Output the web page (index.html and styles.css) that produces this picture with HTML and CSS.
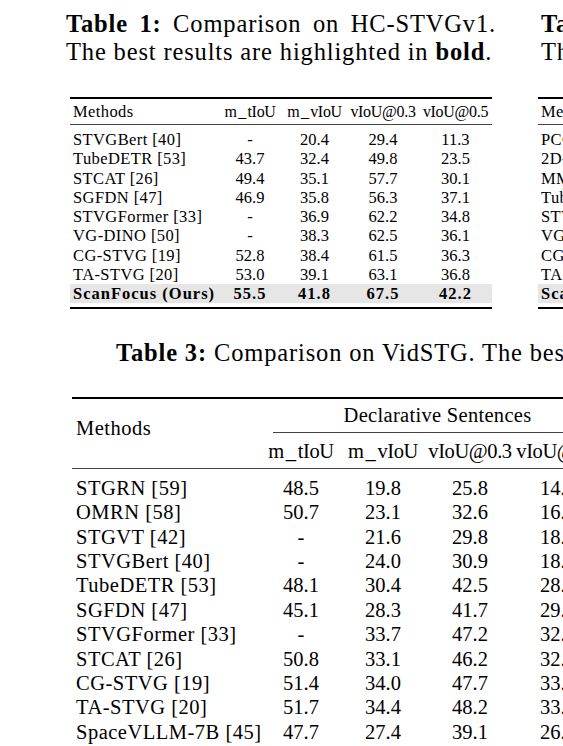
FILE: index.html
```html
<!DOCTYPE html>
<html lang="en">
<head>
<meta charset="utf-8">
<title>Tables</title>
<link rel="stylesheet" href="styles.css">
</head>
<body>
<div class="page">
  <div class="top">
    <section class="col">
      <p class="caption">
        <span class="line just"><b>Table 1:</b> Comparison on HC-STVGv1.</span>
        <span class="line">The best results are highlighted in <b>bold</b>.</span>
      </p>
      <table class="t1">
        <colgroup><col class="w-meth"><col class="w-a"><col class="w-b"><col class="w-c"><col class="w-d"></colgroup>
        <thead>
          <tr><th class="l">Methods</th><th>m<span class="us">_</span>tIoU</th><th>m<span class="us">_</span>vIoU</th><th>vIoU@0.3</th><th>vIoU@0.5</th></tr>
        </thead>
        <tbody>
          <tr><td class="l">STVGBert [40]</td><td>-</td><td>20.4</td><td>29.4</td><td>11.3</td></tr>
          <tr><td class="l">TubeDETR [53]</td><td>43.7</td><td>32.4</td><td>49.8</td><td>23.5</td></tr>
          <tr><td class="l">STCAT [26]</td><td>49.4</td><td>35.1</td><td>57.7</td><td>30.1</td></tr>
          <tr><td class="l">SGFDN [47]</td><td>46.9</td><td>35.8</td><td>56.3</td><td>37.1</td></tr>
          <tr><td class="l">STVGFormer [33]</td><td>-</td><td>36.9</td><td>62.2</td><td>34.8</td></tr>
          <tr><td class="l">VG-DINO [50]</td><td>-</td><td>38.3</td><td>62.5</td><td>36.1</td></tr>
          <tr><td class="l">CG-STVG [19]</td><td>52.8</td><td>38.4</td><td>61.5</td><td>36.3</td></tr>
          <tr><td class="l">TA-STVG [20]</td><td>53.0</td><td>39.1</td><td>63.1</td><td>36.8</td></tr>
          <tr class="ours"><td class="l">ScanFocus (Ours)</td><td>55.5</td><td>41.8</td><td>67.5</td><td>42.2</td></tr>
        </tbody>
      </table>
    </section>
    <section class="col col2">
      <p class="caption">
        <span class="line just"><b>Table 2:</b> Comparison on HC-STVGv2.</span>
        <span class="line">The best results are highlighted in <b>bold</b>.</span>
      </p>
      <table class="t1 t2">
        <colgroup><col class="w-meth2"><col class="w-a"><col class="w-b"><col class="w-c"><col class="w-d"></colgroup>
        <thead>
          <tr><th class="l">Methods</th><th>m<span class="us">_</span>tIoU</th><th>m<span class="us">_</span>vIoU</th><th>vIoU@0.3</th><th>vIoU@0.5</th></tr>
        </thead>
        <tbody>
          <tr><td class="l">PCC [64]</td><td>-</td><td>30.0</td><td>-</td><td>-</td></tr>
          <tr><td class="l">2D-Tan [63]</td><td>-</td><td>30.4</td><td>50.4</td><td>18.8</td></tr>
          <tr><td class="l">MMN [48]</td><td>-</td><td>30.3</td><td>49.0</td><td>25.6</td></tr>
          <tr><td class="l">TubeDETR [53]</td><td>53.9</td><td>36.4</td><td>58.8</td><td>30.6</td></tr>
          <tr><td class="l">STVGFormer [33]</td><td>58.1</td><td>38.7</td><td>65.5</td><td>33.8</td></tr>
          <tr><td class="l">VG-DINO [50]</td><td>-</td><td>39.8</td><td>66.9</td><td>34.7</td></tr>
          <tr><td class="l">CG-STVG [19]</td><td>60.0</td><td>39.5</td><td>64.5</td><td>36.3</td></tr>
          <tr><td class="l">TA-STVG [20]</td><td>60.4</td><td>40.2</td><td>65.8</td><td>36.7</td></tr>
          <tr class="ours"><td class="l">ScanFocus (Ours)</td><td>62.3</td><td>42.1</td><td>69.0</td><td>40.2</td></tr>
        </tbody>
      </table>
    </section>
  </div>

  <section class="bottom">
    <p class="cap3"><b>Table 3:</b> Comparison on VidSTG. The best results are highlighted in <b>bold</b>.</p>
    <table class="t3">
      <colgroup><col class="v-meth"><col class="v-a"><col class="v-b"><col class="v-c"><col class="v-d"></colgroup>
      <thead>
        <tr>
          <th class="l meth" rowspan="2">Methods</th>
          <th class="grp" colspan="4"><div class="grp-label">Declarative Sentences</div></th>
        </tr>
        <tr class="sub">
          <th>m<span class="us">_</span>tIoU</th><th>m<span class="us">_</span>vIoU</th><th>vIoU@0.3</th><th>vIoU@0.5</th>
        </tr>
      </thead>
      <tbody>
        <tr><td class="l">STGRN [59]</td><td>48.5</td><td>19.8</td><td>25.8</td><td>14.6</td></tr>
        <tr><td class="l">OMRN [58]</td><td>50.7</td><td>23.1</td><td>32.6</td><td>16.4</td></tr>
        <tr><td class="l">STGVT [42]</td><td>-</td><td>21.6</td><td>29.8</td><td>18.9</td></tr>
        <tr><td class="l">STVGBert [40]</td><td>-</td><td>24.0</td><td>30.9</td><td>18.4</td></tr>
        <tr><td class="l">TubeDETR [53]</td><td>48.1</td><td>30.4</td><td>42.5</td><td>28.2</td></tr>
        <tr><td class="l">SGFDN [47]</td><td>45.1</td><td>28.3</td><td>41.7</td><td>29.4</td></tr>
        <tr><td class="l">STVGFormer [33]</td><td>-</td><td>33.7</td><td>47.2</td><td>32.8</td></tr>
        <tr><td class="l">STCAT [26]</td><td>50.8</td><td>33.1</td><td>46.2</td><td>32.6</td></tr>
        <tr><td class="l">CG-STVG [19]</td><td>51.4</td><td>34.0</td><td>47.7</td><td>33.1</td></tr>
        <tr><td class="l">TA-STVG [20]</td><td>51.7</td><td>34.4</td><td>48.2</td><td>33.5</td></tr>
        <tr><td class="l">SpaceVLLM-7B [45]</td><td>47.7</td><td>27.4</td><td>39.1</td><td>26.3</td></tr>
      </tbody>
    </table>
  </section>
</div>
</body>
</html>
```

FILE: styles.css
```css
html, body {
  margin: 0;
  padding: 0;
  background: #fff;
  overflow: hidden;
}

body {
  width: 563px;
  height: 746px;
  font-family: "Liberation Serif", "Times New Roman", serif;
  color: #000;
}

.page {
  width: 563px;
}

b {
  font-weight: bold;
}

/* ---------- top two columns ---------- */
.top {
  display: flex;
  gap: 45px;
  padding: 10px 0 0 66px;
}

.col {
  flex: 0 0 430px;
  width: 430px;
}

.caption {
  margin: 0;
  font-size: 24.5px;
  line-height: 28px;
  letter-spacing: 0.85px;
}

.caption .line {
  display: block;
  white-space: nowrap;
}

.caption .just {
  white-space: normal;
  text-align: justify;
  text-align-last: justify;
}

/* ---------- small tables ---------- */
.t1 {
  margin: 31px 0 0 4px;
  width: 422px;
  table-layout: fixed;
  border-collapse: separate;
  border-spacing: 0;
  border-top: 2px solid #000;
  border-bottom: 2px solid #000;
  padding: 0 0 3.5px 0;
  font-size: 16.5px;
}

.t2 {
  margin-left: -3px;
  width: 450px;
}

.w-meth { width: 148px; }
.w-meth2 { width: 176px; }
.w-a { width: 64px; }
.w-b { width: 65px; }
.w-c { width: 72px; }
.w-d { width: 73px; }

.t1 th,
.t1 td {
  padding: 0 2px;
  line-height: 19.25px;
  font-weight: normal;
  text-align: center;
  white-space: nowrap;
}

.t1 th {
  line-height: 25px;
  border-bottom: 1px solid #444;
  font-size: 16px;
  letter-spacing: -0.3px;
}

.t1 .l {
  text-align: left;
  padding-left: 3px;
  letter-spacing: 0.4px;
}

.t1 th.l {
  font-size: 16.5px;
}

.t1 tbody tr:first-child td {
  padding-top: 5px;
}

.t1 .ours td {
  background: #e6e6e6;
  font-weight: bold;
  letter-spacing: 1px;
}

.us {
  padding: 0 0.1em;
}

/* ---------- table 3 ---------- */
.bottom {
  padding-top: 30px;
}

.cap3 {
  margin: 0 0 0 116px;
  font-size: 24.5px;
  line-height: 28px;
  letter-spacing: 0.85px;
  white-space: nowrap;
}

.t3 {
  margin: 30.3px 0 0 72px;
  width: 530px;
  table-layout: fixed;
  border-collapse: separate;
  border-spacing: 0;
  border-top: 2px solid #000;
  font-size: 20.5px;
}

.v-meth { width: 190px; }
.v-a { width: 78px; }
.v-b { width: 86px; }
.v-c { width: 88px; }
.v-d { width: 88px; }

.t3 th,
.t3 td {
  padding: 0 1px;
  line-height: 24.4px;
  font-weight: normal;
  text-align: center;
  white-space: nowrap;
}

.t3 .l {
  text-align: left;
  padding-left: 4px;
  letter-spacing: 0.5px;
}

.t3 th.meth {
  vertical-align: top;
  padding-top: 17px;
  border-bottom: 1px solid #444;
}

.t3 th.grp {
  padding: 0;
}

.grp-label {
  margin-left: 11px;
  padding: 4px 0 5px;
  border-bottom: 1px solid #444;
  letter-spacing: 0.3px;
}

.t3 .sub th {
  padding-top: 5.7px;
  padding-bottom: 4.8px;
  border-bottom: 1px solid #444;
  letter-spacing: -0.4px;
}

.t3 tbody tr:first-child td {
  padding-top: 6.4px;
}
```
